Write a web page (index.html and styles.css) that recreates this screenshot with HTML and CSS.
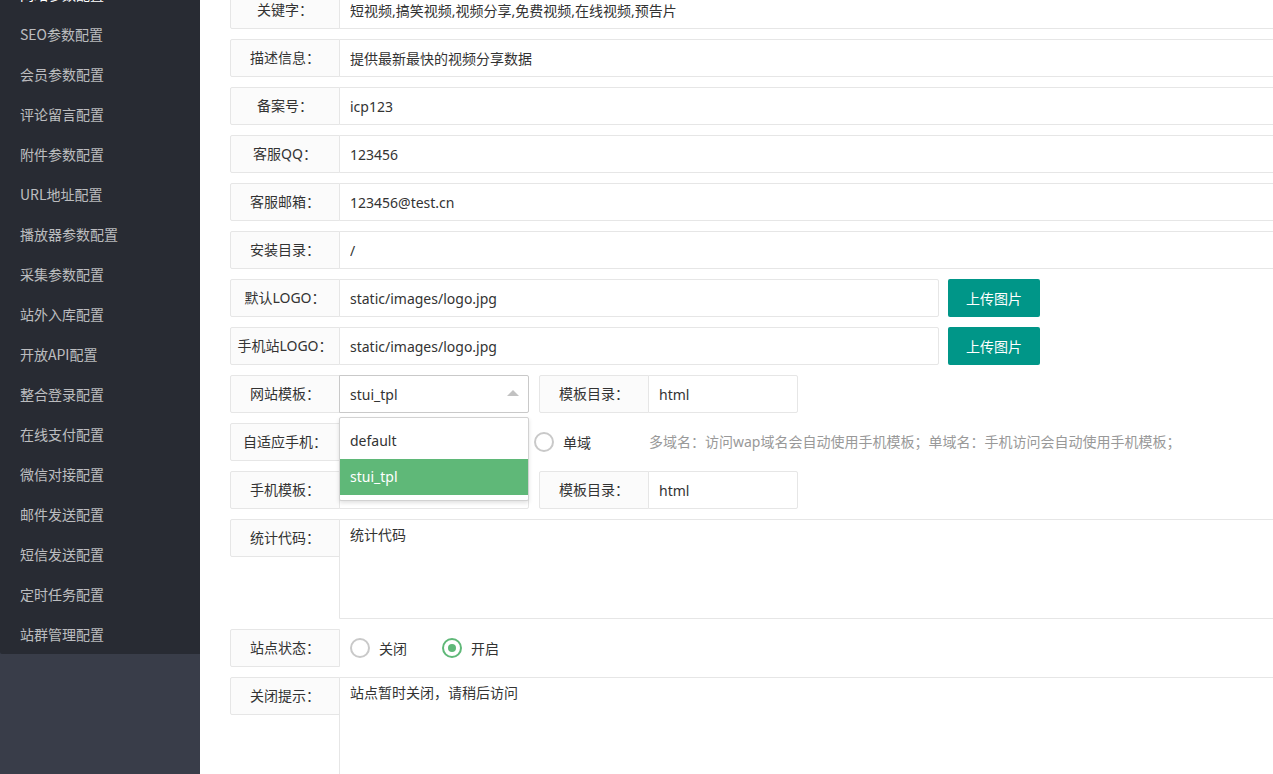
FILE: index.html
```html
<!DOCTYPE html>
<html lang="zh-CN">
<head>
<meta charset="utf-8">
<title>系统设置</title>
<link rel="stylesheet" href="styles.css">
</head>
<body>
<div class="app">
  <aside class="side">
    <ul class="nav">
      <li class="nav-item is-current">网站参数配置</li>
      <li class="nav-item">SEO参数配置</li>
      <li class="nav-item">会员参数配置</li>
      <li class="nav-item">评论留言配置</li>
      <li class="nav-item">附件参数配置</li>
      <li class="nav-item">URL地址配置</li>
      <li class="nav-item">播放器参数配置</li>
      <li class="nav-item">采集参数配置</li>
      <li class="nav-item">站外入库配置</li>
      <li class="nav-item">开放API配置</li>
      <li class="nav-item">整合登录配置</li>
      <li class="nav-item">在线支付配置</li>
      <li class="nav-item">微信对接配置</li>
      <li class="nav-item">邮件发送配置</li>
      <li class="nav-item">短信发送配置</li>
      <li class="nav-item">定时任务配置</li>
      <li class="nav-item">站群管理配置</li>
    </ul>
    <div class="side-fill"></div>
  </aside>

  <main class="main">
    <form class="form">
      <div class="row">
        <label class="lab">关键字：</label>
        <div class="block"><input class="inp" value="短视频,搞笑视频,视频分享,免费视频,在线视频,预告片"></div>
      </div>
      <div class="row">
        <label class="lab">描述信息：</label>
        <div class="block"><input class="inp" value="提供最新最快的视频分享数据"></div>
      </div>
      <div class="row">
        <label class="lab">备案号：</label>
        <div class="block"><input class="inp" value="icp123"></div>
      </div>
      <div class="row">
        <label class="lab">客服QQ：</label>
        <div class="block"><input class="inp" value="123456"></div>
      </div>
      <div class="row">
        <label class="lab">客服邮箱：</label>
        <div class="block"><input class="inp" value="123456@test.cn"></div>
      </div>
      <div class="row">
        <label class="lab">安装目录：</label>
        <div class="block"><input class="inp" value="/"></div>
      </div>
      <div class="row">
        <label class="lab">默认LOGO：</label>
        <div class="inline w600"><input class="inp" value="static/images/logo.jpg"></div>
        <button type="button" class="btn">上传图片</button>
      </div>
      <div class="row">
        <label class="lab">手机站LOGO：</label>
        <div class="inline w600"><input class="inp" value="static/images/logo.jpg"></div>
        <button type="button" class="btn">上传图片</button>
      </div>
      <div class="row">
        <label class="lab">网站模板：</label>
        <div class="inline w190 select is-open">
          <input class="inp sel-inp" value="stui_tpl" readonly>
          <i class="edge"></i>
          <dl class="dropdown">
            <dd>default</dd>
            <dd class="on">stui_tpl</dd>
          </dl>
        </div>
        <label class="lab">模板目录：</label>
        <div class="inline w150"><input class="inp" value="html"></div>
      </div>
      <div class="row">
        <label class="lab">自适应手机：</label>
        <div class="inline w300 radios">
          <span class="radio"><i class="dot"></i>关闭</span>
          <span class="radio"><i class="dot"></i>多域</span>
          <span class="radio"><i class="dot"></i>单域</span>
        </div>
        <div class="aux">多域名：访问wap域名会自动使用手机模板；单域名：手机访问会自动使用手机模板；</div>
      </div>
      <div class="row">
        <label class="lab">手机模板：</label>
        <div class="inline w190 select">
          <input class="inp sel-inp" value="stui_tpl" readonly>
          <i class="edge"></i>
        </div>
        <label class="lab">模板目录：</label>
        <div class="inline w150"><input class="inp" value="html"></div>
      </div>
      <div class="row row-text">
        <label class="lab">统计代码：</label>
        <div class="block"><textarea class="txt">统计代码</textarea></div>
      </div>
      <div class="row">
        <label class="lab">站点状态：</label>
        <div class="inline w300 radios">
          <span class="radio"><i class="dot"></i>关闭</span>
          <span class="radio is-checked"><i class="dot"></i>开启</span>
        </div>
      </div>
      <div class="row row-text">
        <label class="lab">关闭提示：</label>
        <div class="block"><textarea class="txt">站点暂时关闭，请稍后访问</textarea></div>
      </div>
    </form>
  </main>
</div>
</body>
</html>
```

FILE: styles.css
```css
* {
  box-sizing: border-box;
}

html,
body {
  margin: 0;
  padding: 0;
  height: 100%;
  overflow: hidden;
  background: #fff;
}

body {
  font-family: "Noto Sans", "Noto Sans CJK SC", sans-serif;
  font-size: 14px;
  color: #333;
}

.app {
  display: flex;
  height: 100vh;
}

/* ---------- sidebar ---------- */
.side {
  width: 200px;
  flex: none;
  display: flex;
  flex-direction: column;
  background: #393d49;
  overflow: hidden;
}

.nav {
  list-style: none;
  margin: -26px 0 0;
  padding: 0;
  background: #282b33;
  border-radius: 0 0 0 2px;
}

.nav-item {
  height: 40px;
  line-height: 40px;
  padding: 0 20px;
  color: rgba(255, 255, 255, 0.7);
  font-family: "Noto Sans CJK SC", sans-serif;
  white-space: nowrap;
}

.nav-item.is-current {
  color: #fff;
}

.side-fill {
  flex: 1;
}

/* ---------- main ---------- */
.main {
  flex: 1;
  min-width: 0;
  overflow: hidden;
  padding-left: 30px;
}

.form {
  width: 1100px;
  margin-top: -9px;
}

.row {
  display: flex;
  align-items: flex-start;
  margin-bottom: 10px;
  height: 38px;
}

.row-text {
  height: 100px;
}

.lab {
  flex: none;
  width: 110px;
  height: 38px;
  line-height: 35px;
  border: 1px solid #e6e6e6;
  border-radius: 2px 0 0 2px;
  background: #fbfbfb;
  text-align: center;
  white-space: nowrap;
  color: #333;
}

.block {
  flex: 1;
  margin-left: -1px;
}

.inline {
  flex: none;
  margin-left: -1px;
  margin-right: 10px;
  position: relative;
}

.w600 { width: 600px; margin-right: 9px; }
.w190 { width: 190px; }
.w150 { width: 150px; }
.w300 { width: 300px; }

.inp {
  display: block;
  width: 100%;
  height: 38px;
  margin: 0;
  padding: 0 10px;
  border: 1px solid #e6e6e6;
  border-radius: 0 2px 2px 0;
  background: #fff;
  font: inherit;
  color: #333;
  outline: none;
}

.txt {
  display: block;
  width: 100%;
  height: 100px;
  margin: 0;
  padding: 5px 10px;
  border: 1px solid #e6e6e6;
  border-radius: 0 2px 2px 0;
  background: #fff;
  font-family: "Noto Sans", "Noto Sans CJK SC", sans-serif;
  font-size: 14px;
  line-height: 20px;
  color: #333;
  resize: none;
  outline: none;
  overflow: hidden;
}

.btn {
  flex: none;
  height: 38px;
  padding: 0 18px;
  border: 0;
  border-radius: 2px;
  background: #009688;
  color: #fff;
  font-family: "Noto Sans", "Noto Sans CJK SC", sans-serif;
  font-size: 14px;
}

/* ---------- select ---------- */
.sel-inp {
  padding-right: 30px;
  cursor: pointer;
}

.select.is-open .sel-inp {
  border-color: #c9c9c9;
}

.edge {
  position: absolute;
  right: 10px;
  top: 50%;
  margin-top: -3px;
  width: 0;
  height: 0;
  border-style: solid;
  border-width: 6px 6px 0;
  border-color: #c2c2c2 transparent transparent;
}

.select.is-open .edge {
  margin-top: -4px;
  border-width: 0 6px 6px;
  border-color: transparent transparent #c2c2c2;
}

.dropdown {
  position: absolute;
  left: 0;
  top: 42px;
  z-index: 10;
  width: 100%;
  margin: 0;
  padding: 5px 0;
  background: #fff;
  border: 1px solid #d2d2d2;
  border-radius: 2px;
  box-shadow: 0 2px 4px rgba(0, 0, 0, 0.12);
}

.dropdown dd {
  margin: 0;
  padding: 0 10px;
  height: 36px;
  line-height: 36px;
  color: #333;
}

.dropdown dd.on {
  background: #5fb878;
  color: #fff;
}

/* ---------- radios ---------- */
.radios {
  display: flex;
  align-items: center;
  height: 38px;
  padding-left: 11px;
}

.radio {
  display: inline-flex;
  align-items: center;
  gap: 9px;
  margin-right: 35px;
  color: #333;
  white-space: nowrap;
}

.dot {
  width: 20px;
  height: 20px;
  border: 2px solid #c9c9c9;
  border-radius: 50%;
  display: inline-flex;
  align-items: center;
  justify-content: center;
}

.radio.is-checked .dot {
  border-color: #5fb878;
}

.radio.is-checked .dot::after {
  content: "";
  width: 8px;
  height: 8px;
  border-radius: 50%;
  background: #5fb878;
}

.aux {
  line-height: 38px;
  color: #999;
  white-space: nowrap;
}
```
